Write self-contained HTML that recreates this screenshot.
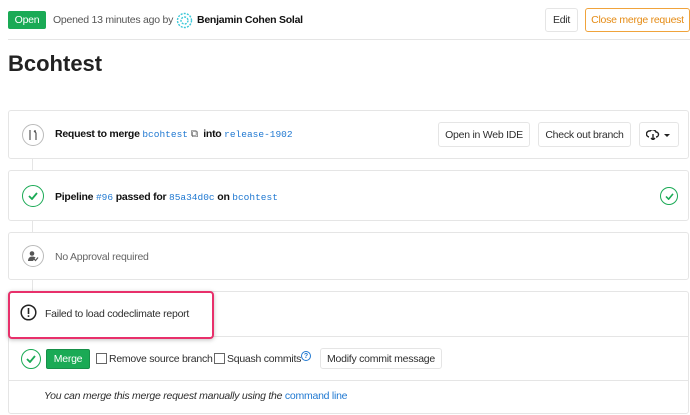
<!DOCTYPE html>
<html><head><meta charset="utf-8"><style>
*{box-sizing:border-box;margin:0;padding:0}
body{width:690px;height:415px;overflow:hidden;background:#fff;font-family:"Liberation Sans",sans-serif;font-size:10.5px;letter-spacing:-0.25px;color:#2e2e2e;position:relative}
.a{position:absolute;white-space:nowrap}
.mono{font-family:"Liberation Mono",monospace;color:#1f78d1;font-size:9.5px;letter-spacing:0}
.btn{position:absolute;border:1px solid #e5e5e5;border-radius:3px;background:#fff;display:flex;align-items:center;justify-content:center;color:#2e2e2e;white-space:nowrap}
.card{position:absolute;left:8px;width:681px;border:1px solid #e5e5e5;border-radius:3px;background:#fff}
.ic{position:absolute;width:22px;height:22px;border-radius:50%;border:1px solid #bbb;display:flex;align-items:center;justify-content:center}
b{font-weight:bold;color:#111}
</style></head><body>
<div class="a" style="left:8px;top:11px;width:38px;height:18px;background:#1aaa55;border-radius:2px;color:#fff;display:flex;align-items:center;justify-content:center">Open</div>
<div class="a" style="left:53px;top:14px;color:#555">Opened 13 minutes ago by</div>
<svg class="a" style="left:176px;top:12px" width="17" height="17" viewBox="0 0 17 17"><g fill="none" stroke="#3cc8d8" stroke-width="1.4" stroke-dasharray="2 1.2"><circle cx="8.5" cy="8.5" r="7"/><circle cx="8.5" cy="8.5" r="3.5"/></g></svg>
<div class="a" style="left:197px;top:14px"><b>Benjamin Cohen Solal</b></div>
<div class="btn" style="left:545px;top:8px;width:33px;height:24px">Edit</div>
<div class="btn" style="left:585px;top:8px;width:105px;height:24px;border-color:#f0a33b;color:#e58b14">Close merge request</div>
<div class="a" style="left:8px;top:39px;width:682px;height:1px;background:#e5e5e5"></div>
<div class="a" style="left:8px;top:51px;font-size:22px;font-weight:bold;color:#222;letter-spacing:0">Bcohtest</div>

<div class="a" style="left:32px;top:158px;width:1px;height:133px;background:#e5e5e5"></div>

<div class="card" style="top:110px;height:49px">
 <div class="ic" style="left:13px;top:13px"><svg width="12" height="12" viewBox="0 0 12 12" fill="none" stroke="#555" stroke-width="1.2"><path d="M3 1v10M9 11V4L7 2M7 2h2"/></svg></div>
 <div class="a" style="left:46px;top:17px"><b>Request to merge</b> <span class="mono">bcohtest</span> <span style="color:#555">⧉</span>&nbsp; <b>into</b> <span class="mono">release-1902</span></div>
 <div class="btn" style="left:429px;top:11px;width:92px;height:25px">Open in Web IDE</div>
 <div class="btn" style="left:529px;top:11px;width:93px;height:25px">Check out branch</div>
 <div class="btn" style="left:630px;top:11px;width:40px;height:25px"><svg width="26" height="10" viewBox="0 0 26 10"><path d="M3 7a3 3 0 0 1 1-6 3.5 3.5 0 0 1 6 1 2.5 2.5 0 0 1 0 5M7 4v6M5 8l2 2 2-2" fill="none" stroke="#222" stroke-width="1.4"/><path d="M18 4h6l-3 3z" fill="#222"/></svg></div>
</div>

<div class="card" style="top:170px;height:51px">
 <div class="ic" style="left:13px;top:14px;border-color:#1aaa55"><svg width="10" height="8" viewBox="0 0 10 8"><path d="M1 4l3 3 5-6" fill="none" stroke="#1aaa55" stroke-width="1.8"/></svg></div>
 <div class="a" style="left:46px;top:20px"><b>Pipeline</b> <span class="mono">#96</span> <b>passed for</b> <span class="mono">85a34d0c</span> <b>on</b> <span class="mono">bcohtest</span></div>
 <div class="ic" style="left:651px;top:16px;width:18px;height:18px;border-color:#1aaa55"><svg width="9" height="7" viewBox="0 0 10 8"><path d="M1 4l3 3 5-6" fill="none" stroke="#1aaa55" stroke-width="1.8"/></svg></div>
</div>

<div class="card" style="top:232px;height:48px">
 <div class="ic" style="left:13px;top:12px"><svg width="12" height="12" viewBox="0 0 12 12" fill="#555"><circle cx="5" cy="3.5" r="2.3"/><path d="M1 11c0-3 2-4.5 4-4.5s3 .5 3.5 1L6 11z"/><path d="M7 9l1.5 1.5L11 7.5" fill="none" stroke="#555" stroke-width="1.2"/></svg></div>
 <div class="a" style="left:46px;top:18px;color:#666">No Approval required</div>
</div>

<div class="card" style="top:291px;height:123px">
 <div class="a" style="left:0;top:44px;width:679px;height:1px;background:#e5e5e5"></div>
 <div class="a" style="left:0;top:88px;width:679px;height:1px;background:#e5e5e5"></div>
 <div class="ic" style="left:12px;top:57px;width:20px;height:20px;border:1.5px solid #1aaa55"><svg width="10" height="8" viewBox="0 0 10 8"><path d="M1 4l3 3 5-6" fill="none" stroke="#1aaa55" stroke-width="1.8"/></svg></div>
 <div class="a" style="left:37px;top:57px;width:44px;height:20px;background:#1aaa55;border:1px solid #168f48;border-radius:2px;color:#fff;display:flex;align-items:center;justify-content:center">Merge</div>
 <div class="a" style="left:87px;top:61px;width:11px;height:11px;border:1px solid #666;background:#fff"></div>
 <div class="a" style="left:100px;top:61px">Remove source branch</div>
 <div class="a" style="left:205px;top:61px;width:11px;height:11px;border:1px solid #666;background:#fff"></div>
 <div class="a" style="left:218px;top:61px">Squash commits</div>
 <div class="a" style="left:292px;top:59px;width:10px;height:10px;border:1.3px solid #1f78d1;border-radius:50%;color:#1f78d1;font-size:7px;font-weight:bold;display:flex;align-items:center;justify-content:center;letter-spacing:0">?</div>
 <div class="btn" style="left:311px;top:56px;width:122px;height:21px">Modify commit message</div>
 <div class="a" style="left:35px;top:98px;font-style:italic">You can merge this merge request manually using the <span style="color:#1f78d1;font-style:normal">command line</span></div>
</div>

<div class="a" style="left:8px;top:291px;width:206px;height:48px;border:2px solid #e8306b;border-radius:4px;box-shadow:0 1px 4px rgba(0,0,0,.25);background:#fff">
 <svg class="a" style="left:10px;top:11px" width="17" height="17" viewBox="0 0 17 17"><circle cx="8.5" cy="8.5" r="7.3" fill="none" stroke="#222" stroke-width="1.5"/><rect x="7.7" y="4" width="1.6" height="6" fill="#222"/><rect x="7.7" y="11.3" width="1.6" height="1.6" fill="#222"/></svg>
 <div class="a" style="left:35px;top:15px">Failed to load codeclimate report</div>
</div>
</body></html>
